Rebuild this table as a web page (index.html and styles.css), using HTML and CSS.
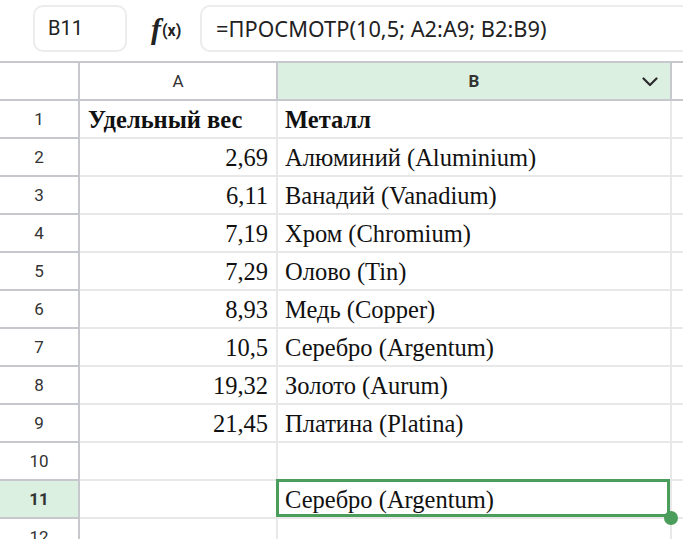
FILE: index.html
```html
<!DOCTYPE html>
<html lang="ru">
<head>
<meta charset="utf-8">
<link rel="stylesheet" href="styles.css">
</head>
<body>
<div class="toolbar">
  <div class="namebox">B11</div>
  <div class="fx"><span class="fx-f">f</span><span class="fx-x">(x)</span></div>
  <div class="formula">=ПРОСМОТР(10,5; A2:A9; B2:B9)</div>
</div>
<div class="sheet">
  <div class="row head">
    <div class="rh"></div>
    <div class="ch">A</div>
    <div class="ch sel">B<svg class="chev" width="16" height="10" viewBox="0 0 16 10"><polyline points="1.5,1.5 8,8 14.5,1.5" fill="none" stroke="#2b2b2b" stroke-width="2.2" stroke-linecap="round" stroke-linejoin="round"/></svg></div>
    <div class="ch last"></div>
  </div>
  <div class="row"><div class="rh">1</div><div class="c a b">Удельный вес</div><div class="c b-col b">Металл</div><div class="c last"></div></div>
  <div class="row"><div class="rh">2</div><div class="c a">2,69</div><div class="c b-col">Алюминий (Aluminium)</div><div class="c last"></div></div>
  <div class="row"><div class="rh">3</div><div class="c a">6,11</div><div class="c b-col">Ванадий (Vanadium)</div><div class="c last"></div></div>
  <div class="row"><div class="rh">4</div><div class="c a">7,19</div><div class="c b-col">Хром (Chromium)</div><div class="c last"></div></div>
  <div class="row"><div class="rh">5</div><div class="c a">7,29</div><div class="c b-col">Олово (Tin)</div><div class="c last"></div></div>
  <div class="row"><div class="rh">6</div><div class="c a">8,93</div><div class="c b-col">Медь (Copper)</div><div class="c last"></div></div>
  <div class="row"><div class="rh">7</div><div class="c a">10,5</div><div class="c b-col">Серебро (Argentum)</div><div class="c last"></div></div>
  <div class="row"><div class="rh">8</div><div class="c a">19,32</div><div class="c b-col">Золото (Aurum)</div><div class="c last"></div></div>
  <div class="row"><div class="rh">9</div><div class="c a">21,45</div><div class="c b-col">Платина (Platina)</div><div class="c last"></div></div>
  <div class="row"><div class="rh">10</div><div class="c a"></div><div class="c b-col"></div><div class="c last"></div></div>
  <div class="row"><div class="rh sel bold">11</div><div class="c a"></div><div class="c b-col active">Серебро (Argentum)<span class="handle"></span></div><div class="c last"></div></div>
  <div class="row"><div class="rh">12</div><div class="c a"></div><div class="c b-col"></div><div class="c last"></div></div>
</div>
</body>
</html>
```

FILE: styles.css
```css
* { box-sizing: border-box; }
html, body { margin: 0; padding: 0; background: #fff; }
body { width: 683px; height: 539px; overflow: hidden; font-family: Inter, "Noto Sans", sans-serif; color: #222; }

.toolbar {
  height: 61px;
  display: flex;
  align-items: flex-start;
  padding-top: 5px;
  padding-left: 33px;
  overflow: hidden;
  white-space: nowrap;
}
.namebox {
  width: 94px;
  height: 47px;
  border: 2px solid #ececec;
  border-radius: 10px;
  font-family: Roboto, sans-serif;
  font-size: 20px;
  line-height: 43px;
  padding-left: 13px;
  color: #222;
  flex: none;
}
.fx {
  width: 42px;
  height: 47px;
  margin-left: 21px;
  display: flex;
  align-items: baseline;
  padding-top: 9px;
  flex: none;
  color: #222;
}
.fx-f {
  font-family: "Liberation Serif", serif;
  font-style: italic;
  font-weight: bold;
  font-size: 30px;
  line-height: 1;
  margin-left: 3px;
}
.fx-x {
  font-family: Roboto, sans-serif;
  font-weight: bold;
  font-size: 16px;
  margin-left: 1px;
  position: relative;
  top: -3px;
}
.formula {
  margin-left: 10px;
  width: 520px;
  height: 47px;
  border: 2px solid #ececec;
  border-radius: 10px;
  font-family: "Noto Sans", sans-serif;
  font-size: 21.8px;
  line-height: 43px;
  padding-left: 14px;
  flex: none;
  color: #222;
}

.sheet { border-top: 2px solid #c7c8cd; }
.row {
  display: grid;
  grid-template-columns: 80px 198px 394px 1fr;
  height: 38px;
}
.rh, .ch {
  border-right: 2px solid #c7c8cd;
  border-bottom: 2px solid #c7c8cd;
  display: flex;
  align-items: center;
  justify-content: center;
  font-family: Roboto, sans-serif;
  font-size: 17px;
  color: #333;
}
.ch { position: relative; }
.ch.sel { background: #dbf0e1; font-weight: bold; }
.ch.last { border-right: none; }
.rh.sel { background: #dbf0e1; }
.rh.bold { font-weight: bold; }
.chev { position: absolute; right: 12px; top: 14px; }

.c {
  border-right: 2px solid #e8e8e8;
  border-bottom: 2px solid #e8e8e8;
  font-family: "Liberation Serif", serif;
  font-size: 24.5px;
  color: #111;
  display: flex;
  align-items: center;
  white-space: nowrap;
  padding-top: 1px;
}
.c.last { border-right: none; }
.c.a { justify-content: flex-end; padding-right: 8px; }
.c.b-col { padding-left: 7px; }
.c.b { font-weight: bold; justify-content: flex-start; padding-left: 8px; }
.c.b-col.b { padding-left: 7px; }

.active { position: relative; }
.active::after {
  content: "";
  position: absolute;
  top: -2px;
  left: -2px;
  right: 0;
  bottom: 0;
  border: 3px solid #4a9d5a;
}
.handle {
  position: absolute;
  right: -8px;
  bottom: -8px;
  width: 14px;
  height: 14px;
  border-radius: 50%;
  background: #4a9d5a;
  z-index: 2;
}
```
